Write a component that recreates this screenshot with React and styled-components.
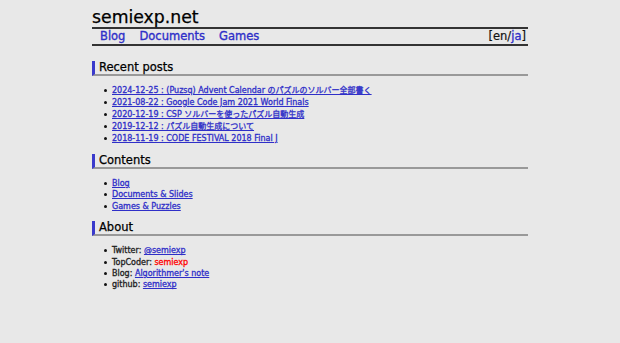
import React from 'react'
import styled, {createGlobalStyle} from 'styled-components'

const Global = createGlobalStyle`
  html, body {
    margin: 0;
    padding: 0;
    background: #e8e8e8;
  }
  body {
    font-family: "DejaVu Sans", "Noto Sans CJK JP", sans-serif;
    color: #222;
  }
`

const Page = styled.div`
  width: 436px;
  margin: 0 auto;
  padding-top: 8px;
`

const Title = styled.h1`
  margin: 0;
  font-size: 17.3px;
  line-height: 19px;
  font-weight: normal;
  color: #000;
  -webkit-text-stroke: 0.25px #000;
  border-bottom: 2px solid #333;
`

const Nav = styled.div`
  display: flex;
  align-items: center;
  height: 15px;
  font-size: 11.5px;
  line-height: 15px;
  border-bottom: 2px solid #333;
`

const NavLink = styled.a`
  color: #2f2fc8;
  text-decoration: none;
  -webkit-text-stroke: 0.35px #2f2fc8;
  margin: 0 7px;
  &:first-child {
    margin-left: 8px;
  }
`

const Lang = styled.span`
  margin-left: auto;
  margin-right: 2px;
  color: #111;
  -webkit-text-stroke: 0.2px #111;
  a {
    color: #2f2fc8;
    text-decoration: none;
    -webkit-text-stroke: 0.35px #2f2fc8;
  }
`

const Section = styled.section`
  margin-top: ${p => p.first ? '15px' : '9px'};
`

const Heading = styled.h2`
  margin: 0;
  font-size: 11.5px;
  line-height: 13px;
  font-weight: normal;
  color: #000;
  -webkit-text-stroke: 0.25px #000;
  padding-left: 4px;
  border-left: 3px solid #3a3acc;
  border-bottom: 2px solid #999;
`

const List = styled.ul`
  margin: 9px 0 0;
  padding-left: 20px;
  list-style: none;
  font-size: 8px;
  line-height: ${p => p.tall ? '12px' : '11.4px'};
  color: #222;
  -webkit-text-stroke: 0.3px currentColor;
`

const Item = styled.li`
  white-space: nowrap;
  &::before {
    content: "";
    display: inline-block;
    width: 3px;
    height: 3px;
    border-radius: 50%;
    background: #111;
    margin-left: -8px;
    margin-right: 5px;
    vertical-align: 1px;
  }
`

const Link = styled.a`
  color: ${p => p.red ? '#ff0000' : '#2f2fc8'};
  text-decoration: ${p => p.red ? 'none' : 'underline'};
  -webkit-text-stroke: 0.3px ${p => p.red ? '#ff0000' : '#2f2fc8'};
`

const posts = [
  '2024-12-25 : (Puzsq) Advent Calendar のパズルのソルバー全部書く',
  '2021-08-22 : Google Code Jam 2021 World Finals',
  '2020-12-19 : CSP ソルバーを使ったパズル自動生成',
  '2019-12-12 : パズル自動生成について',
  '2018-11-19 : CODE FESTIVAL 2018 Final J',
]

export default function App () {
  return (
    <Page>
      <Global />
      <Title>semiexp.net</Title>
      <Nav>
        <NavLink href="#">Blog</NavLink>
        <NavLink href="#">Documents</NavLink>
        <NavLink href="#">Games</NavLink>
        <Lang>[en/<a href="#">ja</a>]</Lang>
      </Nav>

      <Section first>
        <Heading>Recent posts</Heading>
        <List tall>
          {posts.map(p => <Item key={p}><Link href="#">{p}</Link></Item>)}
        </List>
      </Section>

      <Section>
        <Heading>Contents</Heading>
        <List>
          <Item><Link href="#">Blog</Link></Item>
          <Item><Link href="#">Documents &amp; Slides</Link></Item>
          <Item><Link href="#">Games &amp; Puzzles</Link></Item>
        </List>
      </Section>

      <Section>
        <Heading>About</Heading>
        <List>
          <Item>Twitter: <Link href="#">@semiexp</Link></Item>
          <Item>TopCoder: <Link href="#" red>semiexp</Link></Item>
          <Item>Blog: <Link href="#">Algorithmer's note</Link></Item>
          <Item>github: <Link href="#">semiexp</Link></Item>
        </List>
      </Section>
    </Page>
  )
}
